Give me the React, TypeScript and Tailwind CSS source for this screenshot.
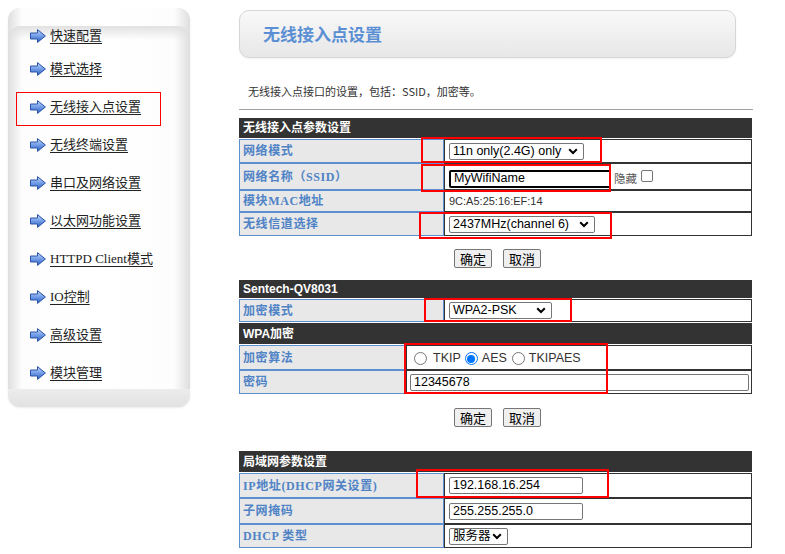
import React from "react";

const SERIF = "font-['Liberation_Serif','Noto_Sans_CJK_SC',serif]";
const SANS = "font-['Liberation_Sans','Noto_Sans_CJK_SC',sans-serif]";
const CJK = "font-['Noto_Sans_CJK_SC','Liberation_Sans',sans-serif]";

function Arrow() {
  return (
    <svg width="16" height="14" viewBox="0 0 16 14" className="shrink-0">
      <defs>
        <linearGradient id="arrowg" x1="0" y1="0" x2="0" y2="1">
          <stop offset="0" stopColor="#c2d6f7" />
          <stop offset="0.45" stopColor="#7aa3ea" />
          <stop offset="1" stopColor="#2d5fc4" />
        </linearGradient>
      </defs>
      <path
        d="M0.5 4 H7.5 V0.6 L15.4 7 L7.5 13.4 V10 H0.5 Z"
        fill="url(#arrowg)"
        stroke="#2a55a6"
        strokeWidth="1"
        strokeLinejoin="round"
      />
    </svg>
  );
}

function Chevron() {
  return (
    <svg width="10" height="7" viewBox="0 0 10 7" className="shrink-0">
      <path d="M1.2 1.3 L5 5 L8.8 1.3" fill="none" stroke="#000" strokeWidth="2" />
    </svg>
  );
}

function Select({ w, text }: { w: string; text: string }) {
  return (
    <div
      className={`${w} h-[17px] border border-[#767676] rounded-[2px] bg-white flex items-center justify-between pl-[3px] pr-[5px] text-[12.5px] leading-none text-black ${SANS}`}
    >
      <span className="whitespace-nowrap">{text}</span>
      <Chevron />
    </div>
  );
}

function TextBox({ w, text, focus }: { w: string; text: string; focus?: boolean }) {
  return (
    <div
      className={`${w} ${
        focus ? "h-[18px] border-2 border-black" : "h-[17px] border border-[#767676]"
      } rounded-[2px] bg-white flex items-center pl-[3px] text-[12.5px] leading-none text-black ${SANS}`}
    >
      {text}
    </div>
  );
}

function SectionHeader({ text, h }: { text: string; h: string }) {
  return (
    <div
      className={`${h} bg-[#333333] text-white font-bold text-[12px] flex items-center pl-[4px] ${SANS}`}
    >
      {text}
    </div>
  );
}

function Row({
  label,
  h,
  lw,
  children,
}: {
  label: string;
  h: string;
  lw: string;
  children?: React.ReactNode;
}) {
  return (
    <div className={`flex ${h}`}>
      <div
        className={`${lw} shrink-0 bg-[#e8e8e8] border border-[#5b8fd0] flex items-center pl-[3px] text-[12px] font-bold tracking-[0.6px] text-[#4f83c6] ${SERIF}`}
      >
        {label}
      </div>
      <div className="flex-1 border border-[#333] bg-white flex items-center pl-[4px]">
        {children}
      </div>
    </div>
  );
}

function Buttons({ mt }: { mt: string }) {
  const b = `h-[19px] px-[5px] border border-[#767676] bg-[#efefef] rounded-[2px] text-[13px] leading-none text-black ${CJK}`;
  return (
    <div className={`${mt} flex justify-center gap-[11px] pl-[2px]`}>
      <button className={b}>确定</button>
      <button className={b}>取消</button>
    </div>
  );
}

function Radio({ checked }: { checked?: boolean }) {
  return checked ? (
    <span className="w-[13px] h-[13px] rounded-full border border-[#0075ff] bg-white flex items-center justify-center shrink-0">
      <span className="w-[8px] h-[8px] rounded-full bg-[#0075ff]" />
    </span>
  ) : (
    <span className="block w-[13px] h-[13px] rounded-full border border-[#767676] bg-white shrink-0" />
  );
}

const navItems = [
  { t: "快速配置", mt: "mt-[18px]" },
  { t: "模式选择", mt: "mt-[13px]" },
  { t: "无线接入点设置", mt: "mt-[18px]" },
  { t: "无线终端设置", mt: "mt-[18px]" },
  { t: "串口及网络设置", mt: "mt-[18px]" },
  { t: "以太网功能设置", mt: "mt-[18px]" },
  { t: "HTTPD Client模式", mt: "mt-[18px]" },
  { t: "IO控制", mt: "mt-[18px]" },
  { t: "高级设置", mt: "mt-[18px]" },
  { t: "模块管理", mt: "mt-[18px]" },
];

export default function App() {
  return (
    <div className="relative w-[785px] h-[554px] bg-white overflow-hidden flex items-start">
      {/* Sidebar */}
      <div className="ml-[8px] mt-[8px] w-[182px] h-[399px] rounded-[12px] flex flex-col overflow-hidden bg-[#e6e6e6] shadow-[0_1px_2px_rgba(0,0,0,0.08)]">
        <div className="flex-1 bg-[linear-gradient(to_right,#dedede,#fdfdfd_14px,#ffffff_50%,#fdfdfd_calc(100%-16px),#dedede)] rounded-t-[12px]">
          <div className="h-full bg-[linear-gradient(to_bottom,rgba(222,222,222,0.9),rgba(255,255,255,0)_14px)] rounded-t-[12px]">
            <ul className="pl-[22px]">
              {navItems.map((n) => (
                <li key={n.t} className={`${n.mt} h-[20px] flex items-center gap-[4px]`}>
                  <Arrow />
                  <span className={`text-[13px] text-[#222] underline underline-offset-[3px] ${SERIF}`}>
                    {n.t}
                  </span>
                </li>
              ))}
            </ul>
          </div>
        </div>
        <div className="h-[18px] bg-[linear-gradient(to_bottom,#ececec,#e2e2e2)] rounded-b-[12px]" />
      </div>

      {/* Main */}
      <div className="ml-[49px] w-[515px] pt-[10px]">
        <div className="w-[497px] h-[48px] rounded-[10px] border border-[#d6d6d6] bg-[linear-gradient(to_bottom,#f9f9f9,#e7e7e7)] shadow-[0_1px_2px_rgba(0,0,0,0.06)] flex items-center pl-[23px]">
          <span className={`text-[17px] font-bold text-[#5b8fd3] ${CJK}`}>无线接入点设置</span>
        </div>

        <div className={`mt-[26px] h-[14px] leading-[14px] pl-[9px] text-[11px] text-[#333] ${CJK}`}>
          无线接入点接口的设置，包括：SSID，加密等。
        </div>

        <div className="mt-[11px] h-[1px] w-[514px] bg-[#a0a0a0]" />

        {/* Table 1 */}
        <div className="mt-[8px] w-[513px]">
          <SectionHeader text="无线接入点参数设置" h="h-[20px]" />
          <div className="mt-[1px]">
            <Row label="网络模式" h="h-[24px]" lw="w-[205px]">
              <Select w="w-[135px]" text="11n only(2.4G) only" />
            </Row>
            <Row label="网络名称（SSID）" h="h-[27px]" lw="w-[205px]">
              <div className="flex items-center pt-[4px]">
                <TextBox w="w-[162px]" text="MyWifiName" focus />
                <span className={`ml-[3px] text-[11.5px] text-[#555] ${CJK}`}>隐藏</span>
                <span className="ml-[4px] mb-[6px] w-[12px] h-[12px] border border-[#767676] rounded-[2px] bg-white" />
              </div>
            </Row>
            <Row label="模块MAC地址" h="h-[22px]" lw="w-[205px]">
              <span className={`text-[11px] text-[#333] ${SANS}`}>9C:A5:25:16:EF:14</span>
            </Row>
            <Row label="无线信道选择" h="h-[24px]" lw="w-[205px]">
              <Select w="w-[146px]" text="2437MHz(channel 6)" />
            </Row>
          </div>
        </div>

        <Buttons mt="mt-[13px]" />

        {/* Table 2 */}
        <div className="mt-[12px] w-[513px]">
          <SectionHeader text="Sentech-QV8031" h="h-[18px]" />
          <div className="mt-[1px]">
            <Row label="加密模式" h="h-[23px]" lw="w-[205px]">
              <Select w="w-[103px]" text="WPA2-PSK" />
            </Row>
          </div>
          <div className="mt-[1px]">
            <SectionHeader text="WPA加密" h="h-[21px]" />
          </div>
          <div className="mt-[1px]">
            <Row label="加密算法" h="h-[25px]" lw="w-[167px]">
              <div className={`flex items-center pl-[3px] pt-[2px] text-[12.5px] text-[#333] ${SANS}`}>
                <Radio />
                <span className="ml-[6px]">TKIP</span>
                <span className="ml-[4px] flex">
                  <Radio checked />
                </span>
                <span className="ml-[4px]">AES</span>
                <span className="ml-[5px] flex">
                  <Radio />
                </span>
                <span className="ml-[4px]">TKIPAES</span>
              </div>
            </Row>
            <Row label="密码" h="h-[24px]" lw="w-[167px]">
              <div className="-ml-[1px]">
                <TextBox w="w-[339px]" text="12345678" />
              </div>
            </Row>
          </div>
        </div>

        <Buttons mt="mt-[14px]" />

        {/* Table 3 */}
        <div className="mt-[24px] w-[513px]">
          <SectionHeader text="局域网参数设置" h="h-[21px]" />
          <div className="mt-[1px]">
            <Row label="IP地址(DHCP网关设置)" h="h-[25px]" lw="w-[205px]">
              <TextBox w="w-[134px]" text="192.168.16.254" />
            </Row>
            <Row label="子网掩码" h="h-[26px]" lw="w-[205px]">
              <TextBox w="w-[134px]" text="255.255.255.0" />
            </Row>
            <Row label="DHCP 类型" h="h-[24px]" lw="w-[205px]">
              <Select w="w-[59px]" text="服务器" />
            </Row>
          </div>
        </div>
      </div>

      {/* red annotation boxes */}
      <div className="absolute left-[16px] top-[92px] w-[145px] h-[34px] border border-[#ff0000] pointer-events-none" />
      <div className="absolute left-[421px] top-[137px] w-[181px] h-[26px] border-2 border-[#ff0000] pointer-events-none" />
      <div className="absolute left-[421px] top-[164px] w-[190px] h-[28px] border-2 border-[#ff0000] pointer-events-none" />
      <div className="absolute left-[419px] top-[212px] w-[193px] h-[27px] border-2 border-[#ff0000] pointer-events-none" />
      <div className="absolute left-[424px] top-[298px] w-[148px] h-[24px] border-2 border-[#ff0000] pointer-events-none" />
      <div className="absolute left-[404px] top-[343px] w-[204px] h-[51px] border-2 border-[#ff0000] pointer-events-none" />
      <div className="absolute left-[416px] top-[469px] w-[193px] h-[29px] border-2 border-[#ff0000] pointer-events-none" />
    </div>
  );
}
